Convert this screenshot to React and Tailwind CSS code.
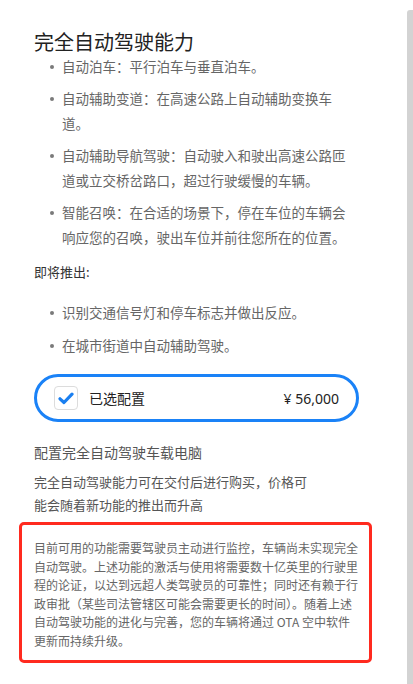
import React from 'react';

const cjk = { fontFamily: '"Noto Sans CJK SC", "Noto Sans", sans-serif' };

const Bullet = ({ children, className = '' }) => (
  <li className={`flex ${className}`}>
    <span className="mt-[11px] ml-[16px] mr-[8px] w-[4px] h-[4px] shrink-0 rounded-full bg-[#7a7a7a]" />
    <span className="w-[290px]">{children}</span>
  </li>
);

const App = () => {
  return (
    <div className="w-[413px] h-[684px] bg-white flex overflow-hidden" style={cjk}>
      <div className="w-[390px] pl-[19px] pt-[30px]">
        <div className="pl-[15px]">
          <h1 className="text-[20px] leading-[24px] text-[#222]">完全自动驾驶能力</h1>
          <ul className="text-[13.5px] leading-[25px] text-[#666] flex flex-col gap-[7px]">
            <Bullet>自动泊车：平行泊车与垂直泊车。</Bullet>
            <Bullet>自动辅助变道：在高速公路上自动辅助变换车道。</Bullet>
            <Bullet>自动辅助导航驾驶：自动驶入和驶出高速公路匝道或立交桥岔路口，超过行驶缓慢的车辆。</Bullet>
            <Bullet>智能召唤：在合适的场景下，停在车位的车辆会响应您的召唤，驶出车位并前往您所在的位置。</Bullet>
          </ul>
          <p className="mt-[12px] text-[13px] leading-[20px] text-[#333]">即将推出:</p>
          <ul className="mt-[18px] text-[13.5px] leading-[25px] text-[#666] flex flex-col gap-[8px]">
            <Bullet>识别交通信号灯和停车标志并做出反应。</Bullet>
            <Bullet>在城市街道中自动辅助驾驶。</Bullet>
          </ul>
          <div className="mt-[16px] w-[325px] h-[48px] rounded-full border-[3px] border-[#1a82f7] flex items-center pl-[17px] pr-[17px]">
            <span className="w-[24px] h-[24px] rounded-[4px] border border-[#dcdcdc] flex items-center justify-center">
              <svg width="16" height="13" viewBox="0 0 16 13">
                <path d="M2 6.8 L6 10.5 L14 2.2" fill="none" stroke="#1a7ff0" strokeWidth="3.2" strokeLinecap="round" strokeLinejoin="round" />
              </svg>
            </span>
            <span className="ml-[11px] text-[14px] text-[#222]">已选配置</span>
            <span className="ml-auto text-[14px] text-[#222]" style={{ fontFamily: '"Noto Sans", "Noto Sans CJK SC", sans-serif' }}>¥ 56,000</span>
          </div>
          <p className="mt-[20px] text-[14px] leading-[20px] text-[#555]">配置完全自动驾驶车载电脑</p>
          <p className="mt-[8px] w-[282px] text-[13px] leading-[23px] text-[#555]">
            完全自动驾驶能力可在交付后进行购买，价格可能会随着新功能的推出而升高
          </p>
        </div>
        <div className="mt-[6px] w-[353px] rounded-[5px] border-[3px] border-[#ff2a1f] pl-[12px] pt-[14px] pb-[9px]">
          <p className="w-[330px] text-[12px] leading-[18.6px] text-[#666]">
            目前可用的功能需要驾驶员主动进行监控，车辆尚未实现完全<br />
            自动驾驶。上述功能的激活与使用将需要数十亿英里的行驶里<br />
            程的论证，以达到远超人类驾驶员的可靠性；同时还有赖于行<br />
            政审批（某些司法管辖区可能会需要更长的时间）。随着上述<br />
            自动驾驶功能的进化与完善，您的车辆将通过 OTA 空中软件<br />
            更新而持续升级。
          </p>
        </div>
      </div>
      <div className="ml-auto mt-[10px] w-[6px] bg-[#d3d3d3] rounded-tl-[3px]" />
    </div>
  );
};

export default App;
